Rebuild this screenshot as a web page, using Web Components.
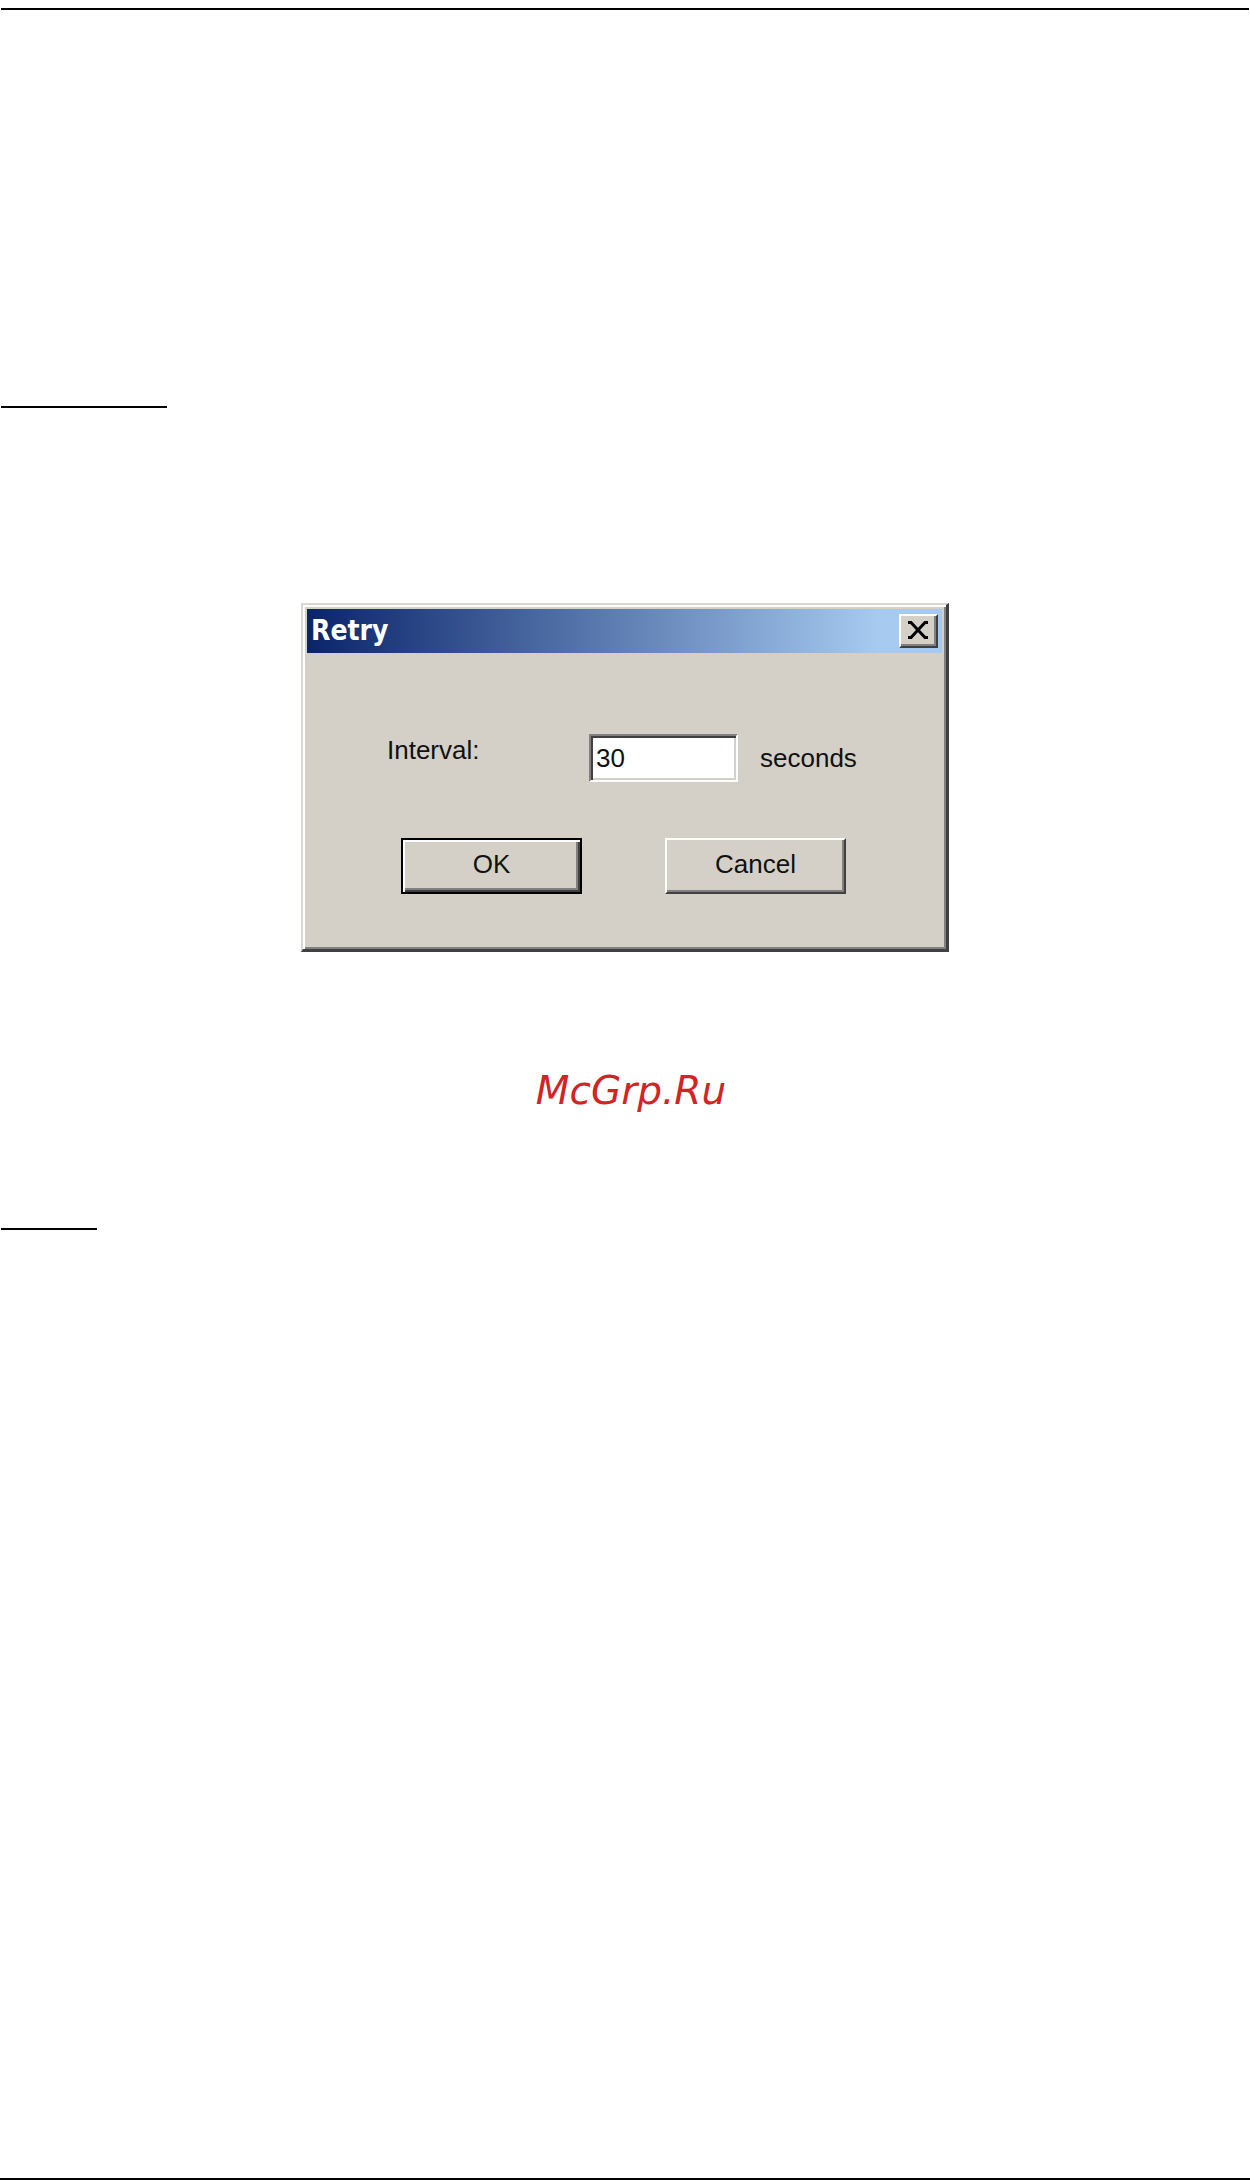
<!DOCTYPE html>
<html lang="en">
<head>
<meta charset="utf-8">
<meta name="viewport" content="width=device-width, initial-scale=1">
<title>Retry</title>
<style>
  body {
    margin: 0;
    background: #fff;
    font-family: "Liberation Sans", Arial, sans-serif;
  }
</style>
</head>
<body>
<manual-page>
  <page-rule></page-rule>
  <page-rule class="heading"></page-rule>
  <classic-window heading="Retry">
    <classic-field label="Interval:" value="30" unit="seconds"></classic-field>
    <classic-button slot="actions" primary>OK</classic-button>
    <classic-button slot="actions">Cancel</classic-button>
  </classic-window>
  <water-mark>McGrp.Ru</water-mark>
  <page-rule class="note"></page-rule>
  <page-rule class="footer"></page-rule>
</manual-page>

<script>
class ManualPage extends HTMLElement {
  constructor() {
    super();
    this.attachShadow({ mode: "open" });
    this.shadowRoot.innerHTML = `
      <style>
        :host {
          display: flex;
          flex-direction: column;
          box-sizing: border-box;
          min-height: 100vh;
          padding-top: 8px;
        }
        ::slotted(page-rule) { margin: 0 1px; }
        ::slotted(.heading) { width: 166px; margin: 396px 1px 195px; }
        ::slotted(.note) { width: 96px; margin-bottom: 80px; }
        ::slotted(.footer) { margin: auto 0 0; }
        ::slotted(classic-window) { align-self: center; }
        ::slotted(water-mark) { margin: 119px 0 117px; }
      </style>
      <slot></slot>
    `;
  }
}

class PageRule extends HTMLElement {
  constructor() {
    super();
    this.attachShadow({ mode: "open" });
    this.shadowRoot.innerHTML = `
      <style>
        :host { display: block; height: 2px; background: #000; }
      </style>
    `;
  }
}

class WaterMark extends HTMLElement {
  constructor() {
    super();
    this.attachShadow({ mode: "open" });
    this.shadowRoot.innerHTML = `
      <style>
        :host {
          display: block;
          padding-left: 12px;
          color: #d22426;
          font: oblique 39px/40px "DejaVu Sans", Verdana, sans-serif;
          text-align: center;
        }
      </style>
      <slot></slot>
    `;
  }
}

class ClassicWindow extends HTMLElement {
  constructor() {
    super();
    this.attachShadow({ mode: "open" });
  }

  connectedCallback() {
    this.render();
    this.shadowRoot
      .getElementById("close")
      .addEventListener("click", () => this.close());
  }

  close() {
    this.dispatchEvent(new CustomEvent("window-close", { bubbles: true }));
  }

  render() {
    this.shadowRoot.innerHTML = `
      <style>
        :host {
          display: block;
          box-sizing: border-box;
          width: 100%;
          max-width: 648px;
          padding: 4px;
          background: #d4d0c8;
          border: solid;
          border-width: 2px 3px 3px 2px;
          border-color: #dad7d0 #404040 #404040 #dad7d0;
          box-shadow: inset 2px 2px #fff, inset -2px -2px #808080;
        }
        header {
          display: flex;
          align-items: center;
          justify-content: space-between;
          height: 44px;
          box-sizing: border-box;
          padding: 0 4px;
          background: linear-gradient(to right, #0a246a, #a6caf0 90%);
        }
        h1 {
          margin: 0;
          color: #fff;
          font: bold 28px/32px "DejaVu Sans Condensed", "Noto Sans", sans-serif;
        }
        #close {
          display: flex;
          align-items: center;
          justify-content: center;
          width: 39px;
          height: 34px;
          padding: 0 2px 2px 0;
          background: #d4d0c8;
          border: 2px solid;
          border-color: #fff #404040 #404040 #fff;
          box-shadow: inset -2px -2px #808080;
        }
        .body { padding: 81px 0 51px 80px; }
        .actions {
          display: flex;
          justify-content: center;
          gap: 83px;
          margin: 56px 0 0 -82px;
        }
      </style>
      <header>
        <h1>${this.getAttribute("heading")}</h1>
        <button id="close" type="button" aria-label="Close">
          <svg width="20" height="18" viewBox="0 0 20 18" fill="none" stroke="#000" stroke-width="3">
            <path d="M0 1.500h3L17 16.500h3M20 1.500h-3L3 16.500H0" />
          </svg>
        </button>
      </header>
      <div class="body">
        <slot></slot>
        <div class="actions"><slot name="actions"></slot></div>
      </div>
    `;
  }
}

class ClassicField extends HTMLElement {
  constructor() {
    super();
    this.attachShadow({ mode: "open" });
  }

  connectedCallback() {
    this.shadowRoot.innerHTML = `
      <style>
        :host {
          display: grid;
          grid-template-columns: 180px 149px auto;
          column-gap: 22px;
          align-items: center;
          color: #111;
          font-size: 26px;
          line-height: 32px;
        }
        label { align-self: start; }
        input {
          box-sizing: border-box;
          width: 100%;
          height: 48px;
          padding: 0 5px;
          background: #fff;
          border: 2px solid;
          border-color: #808080 #fff #fff #808080;
          border-radius: 0;
          box-shadow: inset 2px 2px #404040, inset -2px -2px #d4d0c8;
          color: inherit;
          font: inherit;
          outline: 0;
        }
      </style>
      <label for="value">${this.getAttribute("label")}</label>
      <input id="value" type="text" value="${this.getAttribute("value")}">
      <span>${this.getAttribute("unit")}</span>
    `;
  }
}

class ClassicButton extends HTMLElement {
  constructor() {
    super();
    this.attachShadow({ mode: "open" });
    this.shadowRoot.innerHTML = `
      <style>
        :host { display: block; }
        button {
          display: block;
          box-sizing: border-box;
          width: 181px;
          height: 56px;
          padding: 0 0 4px;
          background: #d4d0c8;
          border: 2px solid;
          border-color: #fff #404040 #404040 #fff;
          border-radius: 0;
          box-shadow: inset -2px -2px #808080;
          color: #111;
          font: 26px/32px "Liberation Sans", Arial, sans-serif;
        }
        /* the default button has a black frame round its bevel */
        :host([primary]) button {
          border-color: #000;
          box-shadow: inset 2px 2px #fff, inset -2px -2px #404040, inset -4px -4px #808080;
        }
      </style>
      <button type="button"><slot></slot></button>
    `;
  }
}

window.customElements.define("manual-page", ManualPage);
window.customElements.define("page-rule", PageRule);
window.customElements.define("water-mark", WaterMark);
window.customElements.define("classic-window", ClassicWindow);
window.customElements.define("classic-field", ClassicField);
window.customElements.define("classic-button", ClassicButton);
</script>
</body>
</html>
